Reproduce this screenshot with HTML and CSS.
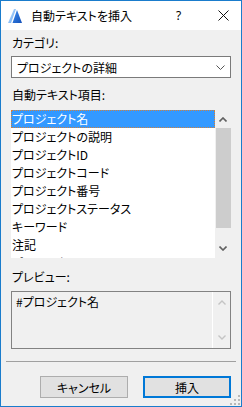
FILE: index.html
```html
<!DOCTYPE html>
<html lang="ja">
<head>
    <meta charset="UTF-8">
    <meta name="viewport" content="width=device-width, initial-scale=1.0">
    <title>自動テキストを挿入</title>
    <link rel="stylesheet" href="styles.css">
</head>
<body>
    <div class="window">
        <div class="titlebar">
            <svg class="app-icon" width="15" height="15" viewBox="0 0 15 15">
                <defs>
                    <linearGradient id="lite" x1="0" y1="0" x2="1" y2="1">
                        <stop offset="0" stop-color="#cfe6ff"/>
                        <stop offset="1" stop-color="#5aa2f0"/>
                    </linearGradient>
                    <linearGradient id="dark" x1="0" y1="0" x2="1" y2="1">
                        <stop offset="0" stop-color="#3d8ef0"/>
                        <stop offset="1" stop-color="#1450b8"/>
                    </linearGradient>
                </defs>
                <polygon points="0,15 6,1 8,1 3,15" fill="url(#lite)"/>
                <polygon points="4.5,15 9,2 14,15" fill="url(#dark)"/>
            </svg>
            <span class="title">自動テキストを挿入</span>
            <span class="help">?</span>
            <svg class="close" width="11" height="11" viewBox="0 0 11 11">
                <path d="M0.5 0.5 L10.5 10.5 M10.5 0.5 L0.5 10.5" stroke="#111" stroke-width="1"/>
            </svg>
        </div>

        <div class="content">
            <div class="label first">カテゴリ:</div>
            <div class="select">
                <span>プロジェクトの詳細</span>
                <svg width="9" height="5" viewBox="0 0 9 5">
                    <path d="M0.5 0.5 L4.5 4.5 L8.5 0.5" fill="none" stroke="#555" stroke-width="1"/>
                </svg>
            </div>

            <div class="label items-label">自動テキスト項目:</div>
            <div class="listbox">
                <ul class="items">
                    <li class="selected">プロジェクト名</li>
                    <li>プロジェクトの説明</li>
                    <li>プロジェクトID</li>
                    <li>プロジェクトコード</li>
                    <li>プロジェクト番号</li>
                    <li>プロジェクトステータス</li>
                    <li>キーワード</li>
                    <li>注記</li>
                    <li>プロジェクトメモ</li>
                </ul>
                <div class="scrollbar">
                    <svg class="arrow" width="8" height="5" viewBox="0 0 8 5">
                        <path d="M0.5 4.5 L4 1 L7.5 4.5" fill="none" stroke="#606060" stroke-width="1.6"/>
                    </svg>
                    <div class="thumb"></div>
                    <svg class="arrow down" width="8" height="5" viewBox="0 0 8 5">
                        <path d="M0.5 0.5 L4 4 L7.5 0.5" fill="none" stroke="#606060" stroke-width="1.6"/>
                    </svg>
                </div>
            </div>

            <div class="label preview-label">プレビュー:</div>
            <div class="preview">
                <div class="preview-text">#プロジェクト名</div>
                <div class="preview-scroll">
                    <svg width="8" height="5" viewBox="0 0 8 5">
                        <path d="M0.5 4.5 L4 1 L7.5 4.5" fill="none" stroke="#c4c4c4" stroke-width="1.4"/>
                    </svg>
                    <svg width="8" height="5" viewBox="0 0 8 5">
                        <path d="M0.5 0.5 L4 4 L7.5 0.5" fill="none" stroke="#c4c4c4" stroke-width="1.4"/>
                    </svg>
                </div>
            </div>

            <div class="separator"></div>

            <div class="buttons">
                <button class="btn">キャンセル</button>
                <button class="btn default">挿入</button>
            </div>
        </div>

        <svg class="grip" width="10" height="10" viewBox="0 0 10 10">
            <rect x="8" y="0" width="2" height="2" fill="#b8b8b8"/>
            <rect x="4" y="4" width="2" height="2" fill="#b8b8b8"/>
            <rect x="8" y="4" width="2" height="2" fill="#b8b8b8"/>
            <rect x="0" y="8" width="2" height="2" fill="#b8b8b8"/>
            <rect x="4" y="8" width="2" height="2" fill="#b8b8b8"/>
            <rect x="8" y="8" width="2" height="2" fill="#b8b8b8"/>
        </svg>
    </div>
</body>
</html>
```

FILE: styles.css
```css
body {
    margin: 0;
    padding: 0;
    font-family: "Noto Sans CJK JP", "Noto Sans", sans-serif;
    font-size: 12px;
    font-feature-settings: "palt";
    color: #000;
}
.window {
    position: relative;
    width: 242px;
    height: 407px;
    box-sizing: border-box;
    border: 1px solid #1a7ccc;
    background-color: #f0f0f0;
}
.titlebar {
    height: 29px;
    background-color: #fff;
    display: flex;
    align-items: center;
}
.app-icon {
    margin-left: 7px;
}
.title {
    margin-left: 8px;
    font-size: 12px;
    line-height: 16px;
}
.help {
    margin-left: 44px;
    font-family: "Noto Sans", sans-serif;
    font-size: 12px;
}
.close {
    margin-left: 37px;
}
.content {
    padding: 0 10px;
}
.label {
    line-height: 16px;
    padding-left: 1px;
}
.label.first {
    margin-top: 5px;
}
.select {
    margin-top: 5px;
    height: 22px;
    box-sizing: border-box;
    border: 1px solid #7a7a7a;
    background-color: #fff;
    display: flex;
    align-items: center;
    justify-content: space-between;
    padding: 0 5px 0 5px;
}
.select svg {
    margin-top: 1px;
}
.items-label {
    margin-top: 9px;
}
.listbox {
    margin-top: 7px;
    height: 148px;
    display: flex;
    overflow: hidden;
}
.items {
    list-style: none;
    margin: 0;
    padding: 0;
    flex: 1;
    background-color: #fff;
    overflow: hidden;
}
.items li {
    height: 18px;
    line-height: 18px;
    padding-left: 1px;
    white-space: nowrap;
}
.items li.selected {
    background-color: #3399ff;
    color: #fff;
    outline: 1px dotted #d0803a;
    outline-offset: -1px;
}
.scrollbar {
    width: 16px;
    display: flex;
    flex-direction: column;
    align-items: center;
}
.scrollbar .arrow {
    margin-top: 7px;
    height: 5px;
}
.scrollbar .thumb {
    margin-top: 6px;
    width: 15px;
    height: 100px;
    background-color: #cdcdcd;
}
.scrollbar .arrow.down {
    margin-top: 18px;
}
.preview-label {
    margin-top: 11px;
}
.preview {
    margin-top: 6px;
    height: 58px;
    box-sizing: border-box;
    border: 1px solid #828282;
    display: flex;
}
.preview-text {
    flex: 1;
    padding: 2px 4px;
    line-height: 16px;
}
.preview-scroll {
    width: 17px;
    border-left: 1px solid #fff;
    display: flex;
    flex-direction: column;
    align-items: center;
    justify-content: space-between;
    padding: 8px 0 8px;
}
.separator {
    margin: 12px -5px 0;
    height: 1px;
    background-color: #a0a0a0;
}
.buttons {
    margin-top: 14px;
    display: flex;
    justify-content: flex-end;
    gap: 15px;
}
.btn {
    width: 88px;
    height: 22px;
    box-sizing: border-box;
    border: 1px solid #adadad;
    background-color: #e1e1e1;
    font-family: "Noto Sans CJK JP", sans-serif;
    font-size: 12px;
    font-feature-settings: "palt";
    color: #000;
    padding: 0;
}
.btn.default {
    border: 2px solid #0078d7;
}
.grip {
    position: absolute;
    right: 1px;
    bottom: 1px;
}
```
